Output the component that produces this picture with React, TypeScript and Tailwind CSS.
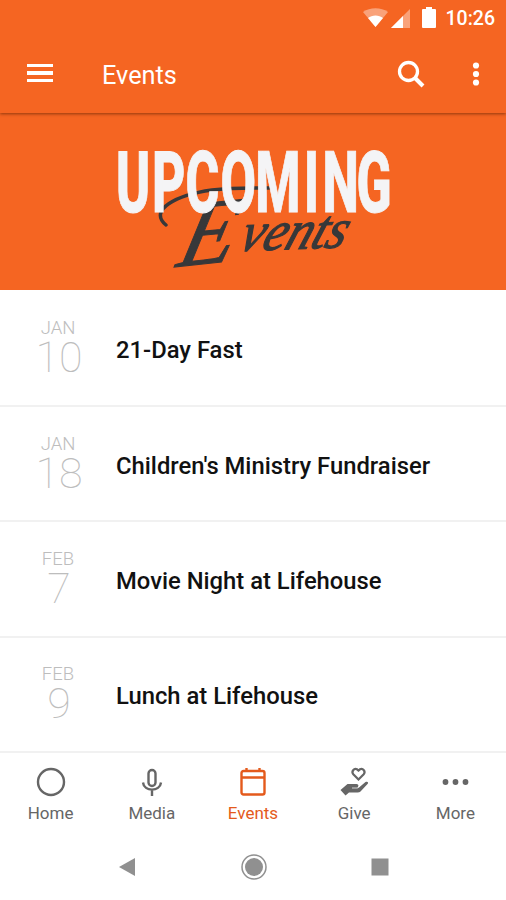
const events = [
  { month: "JAN", day: "10", title: "21-Day Fast" },
  { month: "JAN", day: "18", title: "Children's Ministry Fundraiser" },
  { month: "FEB", day: "7", title: "Movie Night at Lifehouse" },
  { month: "FEB", day: "9", title: "Lunch at Lifehouse" },
];

function StatusBar() {
  return (
    <div className="flex h-9 items-center justify-end pr-[11px] text-white">
      <svg width="76" height="24" viewBox="0 0 76 24" fill="currentColor">
        {/* Wifi */}
        <path d="M0 6C7 1 18 1 25 6L12.500 21Z" opacity=".4" />
        <path d="M5 12C9 8.500 16 8.500 20 12L12.500 21Z" />
        {/* Signal */}
        <path d="M28 22H47V3Z" opacity=".4" />
        <path d="M28 22H40V10Z" />
        {/* Battery */}
        <path d="M63 1h6v2h3q1 0 1 1v17q0 1-1 1H60q-1 0-1-1V4q0-1 1-1h3Z" />
      </svg>
      <span className="ml-[7px] pt-[2px] text-[19.500px] font-medium leading-none">10:26</span>
    </div>
  );
}

function Toolbar() {
  return (
    <header className="relative z-10 flex h-[113px] flex-col bg-[#f56522] shadow-[0_1px_3px_rgba(90,30,0,0.65)]">
      <StatusBar />
      <div className="flex h-[77px] items-center pl-[27px] pr-[20px] text-white">
        <div className="mb-[3px] flex flex-col gap-1">
          <span className="h-[3.500px] w-[26px] bg-white" />
          <span className="h-[3.500px] w-[26px] bg-white" />
          <span className="h-[3.500px] w-[26px] bg-white" />
        </div>
        <h1 className="ml-[49px] pt-[3px] text-[25.300px] leading-none">Events</h1>
        <svg className="mb-[2px] ml-auto" width="28" height="28" viewBox="0 0 28 28" fill="none" stroke="currentColor" strokeWidth="3.300">
          <circle cx="11.500" cy="11.500" r="9" />
          <path d="M18 18L26 26" strokeWidth="4" />
        </svg>
        <svg className="mb-[2px] ml-[41px]" width="20" height="26" viewBox="0 0 20 26" fill="currentColor">
          <circle cx="10" cy="4.500" r="3.100" />
          <circle cx="10" cy="13" r="3.100" />
          <circle cx="10" cy="21.500" r="3.100" />
        </svg>
      </div>
    </header>
  );
}

function Banner() {
  return (
    <div className="h-[177px] bg-[#f56522]">
      <svg width="506" height="177" viewBox="0 113 506 177">
        {/* Flourish */}
        <path d="M166 225C148 210 176 195 212 190C232 187.500 252 188 269 188" fill="none" stroke="#37383a" strokeWidth="3.500" strokeLinecap="round" />
        <text transform="translate(175 267) rotate(-6) skewX(-20)" fontFamily="Liberation Serif, serif" fontStyle="italic" fontSize="92" textLength="56" lengthAdjust="spacingAndGlyphs" fill="#37383a" stroke="#37383a" strokeWidth="1">E</text>
        <text transform="translate(237 251) rotate(-2) skewX(-22)" fontFamily="Liberation Serif, serif" fontStyle="italic" fontSize="55" textLength="106" lengthAdjust="spacingAndGlyphs" fill="#37383a" stroke="#37383a" strokeWidth="1.200">vents</text>
        <text transform="translate(116 211.500) scale(.6 1)" x="0 60 116 174 232 313 344 401" fontFamily="Roboto, sans-serif" fontWeight="800" fontSize="86" fill="#f4f4f6" stroke="#f4f4f6" strokeWidth="1">UPCOMING</text>
      </svg>
    </div>
  );
}

function EventList() {
  return (
    <ul className="pt-[1.500px]">
      {events.map((event) => (
        <li key={event.title} className="flex h-[115.400px] items-center border-b-2 border-[#f1f1f1]">
          <div className="flex w-[116px] flex-col items-center text-[#bdbdbd]">
            <span className="text-[18.500px] font-light leading-[18px]">{event.month}</span>
            <span className="pl-[2px] text-[43px] font-thin leading-[40px]">{event.day}</span>
          </div>
          <span className="pt-[6px] text-[23.800px] font-medium leading-none text-[#111]">{event.title}</span>
        </li>
      ))}
    </ul>
  );
}

const tabs = [
  { label: "Home", icon: <circle cx="16" cy="16" r="13" /> },
  {
    label: "Media",
    icon: (
      <>
        <rect x="12.500" y="4" width="7" height="16" rx="3.500" />
        <path d="M7 16.500C8 26 24 26 25 16.500M16 23.500V30" />
      </>
    ),
  },
  {
    label: "Events",
    icon: (
      <>
        <rect x="4.500" y="5" width="23" height="23.500" rx="2" />
        <path d="M4 11.500H28M9.500 2V5M22.500 2V5" />
      </>
    ),
  },
  {
    label: "Give",
    icon: (
      <>
        <path d="M20.500 13.500L15.300 8.300C13 5.500 16 2 19 3.300L20.500 4.500L22 3.300C25 2 28 5.500 25.700 8.300Z" strokeWidth="2.200" />
        <path d="M2.500 24L9.500 18H18.500C21 18 21 21 19 21.500H15H21L27.500 16C29.500 15 31 16.500 29.500 18L22.500 25.500Q21.500 26.500 19.500 26.500H11L7.500 29.500Z" fill="currentColor" stroke="none" />
        <path d="M14 22H19C20.500 22 21 21 21 20" stroke="white" strokeWidth=".7" />
      </>
    ),
  },
  {
    label: "More",
    icon: (
      <g fill="currentColor" stroke="none">
        <circle cx="6.500" cy="16" r="2.900" />
        <circle cx="16.500" cy="16" r="2.900" />
        <circle cx="26.500" cy="16" r="2.900" />
      </g>
    ),
  },
];

function TabBar() {
  return (
    <nav className="grid h-[82px] grid-cols-5 pt-[13px]">
      {tabs.map((tab) => (
        <a key={tab.label} className={tab.label === "Events" ? "flex flex-col items-center text-[#e45a1c]" : "flex flex-col items-center text-[#666]"}>
          <svg width="32" height="32" viewBox="0 0 32 32" fill="none" stroke="currentColor" strokeWidth="2.400">
            {tab.icon}
          </svg>
          <span className="mt-[6px] text-[17px] leading-[18px]">{tab.label}</span>
        </a>
      ))}
    </nav>
  );
}

function SystemBar() {
  return (
    <div className="flex h-[66px] items-start justify-between px-[116px] pt-[18px] text-[#909090]">
      <svg width="22" height="28" viewBox="0 0 22 28" fill="currentColor">
        <path d="M3 14L19 5V23Z" />
      </svg>
      <svg width="28" height="28" viewBox="0 0 28 28" fill="currentColor">
        <circle cx="14" cy="14" r="12" fill="none" stroke="currentColor" strokeWidth="1.500" />
        <circle cx="14" cy="14" r="9" />
      </svg>
      <svg width="20" height="28" viewBox="0 0 20 28" fill="currentColor">
        <rect x="1.500" y="5.500" width="17" height="17" />
      </svg>
    </div>
  );
}

function App() {
  return (
    <div className="h-[900px] w-[506px] overflow-hidden bg-white font-['Roboto',sans-serif]">
      <Toolbar />
      <Banner />
      <EventList />
      <TabBar />
      <SystemBar />
    </div>
  );
}

export default App;
